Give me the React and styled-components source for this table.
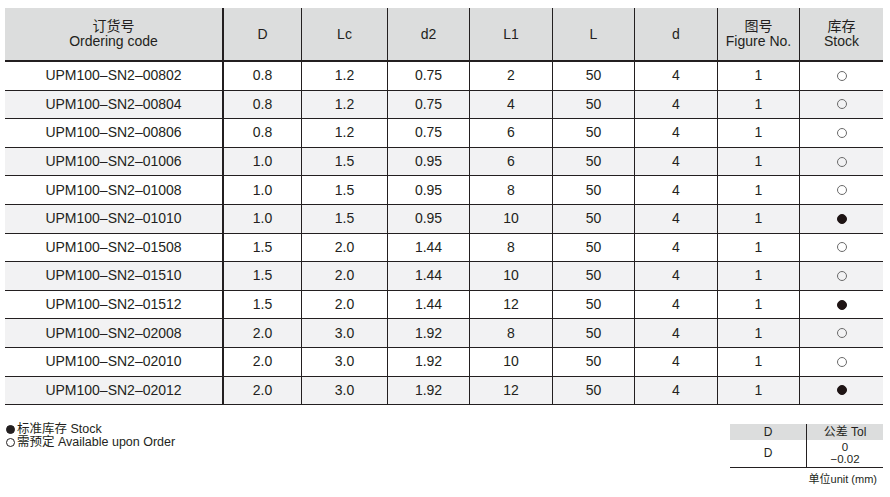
import React from "react";
import styled, { createGlobalStyle } from "styled-components";

const GlobalStyle = createGlobalStyle`
  html, body { margin: 0; padding: 0; background: #ffffff; }
  body { font-family: "Liberation Sans", Arial, "Noto Sans CJK SC", sans-serif; color: #231f20; }
  * { box-sizing: border-box; }
`;

const INK = "#231f20";
const COLS = [217, 79, 86, 82, 83, 82, 83, 82, 84];

const Page = styled.div`
  width: 890px;
  height: 497px;
  padding: 8px 7px 0 5px;
  overflow: hidden;
`;

const Grid = styled.div`
  display: grid;
  grid-template-columns: ${COLS.map((c) => c + "px").join(" ")};
  grid-template-rows: 54px repeat(12, 28.6px);
  width: 878px;
`;

const Cell = styled.div`
  display: flex;
  flex-direction: column;
  align-items: center;
  justify-content: center;
  font-size: 14px;
  line-height: 15px;
  text-align: center;
  white-space: nowrap;
  color: ${INK};
  background: ${(p) => (p.$head ? "#dcdddd" : p.$alt ? "#f2f2f3" : "#ffffff")};
  border-bottom: ${(p) => (p.$head ? "2px" : "1px")} solid ${INK};
  border-left: ${(p) => (p.$col === 0 ? "0" : p.$col === 1 ? "2px" : "1px")} solid ${INK};
`;

const Mark = styled.span`
  display: block;
  width: 10px;
  height: 10px;
  border-radius: 50%;
  background: ${(p) => (p.$filled ? "#1e1414" : "transparent")};
  border: 1px solid ${(p) => (p.$filled ? "#1e1414" : "#6a6a6a")};
`;

const Footer = styled.div`
  display: flex;
  justify-content: space-between;
  align-items: flex-start;
  margin-top: 18px;
  width: 878px;
`;

const Legend = styled.div`
  display: flex;
  flex-direction: column;
  padding-left: 1px;
`;

const LegendLine = styled.div`
  display: flex;
  align-items: center;
  font-size: 12.5px;
  line-height: 13px;
  color: ${INK};
  white-space: nowrap;
`;

const LegendDot = styled.span`
  display: inline-block;
  width: 9px;
  height: 9px;
  border-radius: 50%;
  margin-right: 2px;
  background: ${(p) => (p.$filled ? INK : "transparent")};
  border: 1px solid ${INK};
`;

const TolBlock = styled.div`
  display: flex;
  flex-direction: column;
  align-items: flex-end;
  margin-top: 1px;
`;

const TolGrid = styled.div`
  display: grid;
  grid-template-columns: 76px 77px;
  grid-template-rows: 16px 27px;
  width: 153px;
  border-bottom: 1px solid ${INK};
`;

const TolCell = styled.div`
  display: flex;
  flex-direction: column;
  align-items: center;
  justify-content: center;
  font-size: 12px;
  line-height: 11px;
  color: ${INK};
  background: ${(p) => (p.$head ? "#dcdddd" : "#ffffff")};
  border-left: ${(p) => (p.$right ? "1px solid " + INK : "0")};
  white-space: nowrap;
`;

const TolLine = styled.span`
  display: block;
  font-size: 11.5px;
  line-height: 11.5px;
`;

const Unit = styled.div`
  font-size: 11px;
  line-height: 13px;
  margin-top: 5px;
  padding-right: 6px;
  color: ${INK};
  white-space: nowrap;
`;

const HEAD = [
  ["订货号", "Ordering code"],
  ["D"],
  ["Lc"],
  ["d2"],
  ["L1"],
  ["L"],
  ["d"],
  ["图号", "Figure No."],
  ["库存", "Stock"],
];

const ROWS = [
  ["UPM100–SN2–00802", "0.8", "1.2", "0.75", "2", "50", "4", "1", false],
  ["UPM100–SN2–00804", "0.8", "1.2", "0.75", "4", "50", "4", "1", false],
  ["UPM100–SN2–00806", "0.8", "1.2", "0.75", "6", "50", "4", "1", false],
  ["UPM100–SN2–01006", "1.0", "1.5", "0.95", "6", "50", "4", "1", false],
  ["UPM100–SN2–01008", "1.0", "1.5", "0.95", "8", "50", "4", "1", false],
  ["UPM100–SN2–01010", "1.0", "1.5", "0.95", "10", "50", "4", "1", true],
  ["UPM100–SN2–01508", "1.5", "2.0", "1.44", "8", "50", "4", "1", false],
  ["UPM100–SN2–01510", "1.5", "2.0", "1.44", "10", "50", "4", "1", false],
  ["UPM100–SN2–01512", "1.5", "2.0", "1.44", "12", "50", "4", "1", true],
  ["UPM100–SN2–02008", "2.0", "3.0", "1.92", "8", "50", "4", "1", false],
  ["UPM100–SN2–02010", "2.0", "3.0", "1.92", "10", "50", "4", "1", false],
  ["UPM100–SN2–02012", "2.0", "3.0", "1.92", "12", "50", "4", "1", true],
];

export default function App() {
  return (
    <Page>
      <GlobalStyle />
      <Grid>
        {HEAD.map((lines, i) => (
          <Cell key={"h" + i} $head $col={i}>
            {lines.map((l) => (
              <span key={l}>{l}</span>
            ))}
          </Cell>
        ))}
        {ROWS.map((row, r) =>
          row.map((v, c) => (
            <Cell key={r + "-" + c} $col={c} $alt={r % 2 === 1}>
              {c === 8 ? <Mark $filled={v} aria-label={v ? "●" : "○"} /> : v}
            </Cell>
          ))
        )}
      </Grid>
      <Footer>
        <Legend>
          <LegendLine>
            <LegendDot $filled />
            标准库存 Stock
          </LegendLine>
          <LegendLine>
            <LegendDot />
            需预定 Available upon Order
          </LegendLine>
        </Legend>
        <TolBlock>
          <TolGrid>
            <TolCell $head>D</TolCell>
            <TolCell $head $right>公差 Tol</TolCell>
            <TolCell>D</TolCell>
            <TolCell $right>
              <TolLine>0</TolLine>
              <TolLine>−0.02</TolLine>
            </TolCell>
          </TolGrid>
          <Unit>单位unit (mm)</Unit>
        </TolBlock>
      </Footer>
    </Page>
  );
}
